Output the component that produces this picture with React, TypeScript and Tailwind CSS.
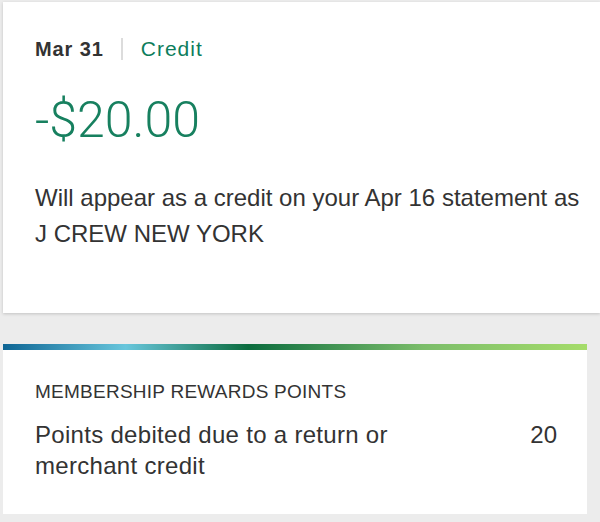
export default function App() {
  return (
    <main
      className="min-h-screen w-[600px] h-[522px] overflow-hidden bg-[#ececec] pt-[2px] pl-[3px] text-[#333]"
      style={{ fontFamily: '"Liberation Sans", Arial, sans-serif' }}
    >
      {/* Transaction card */}
      <section className="h-[311px] bg-white pl-[32px] pt-[35px] shadow-[0_1px_3px_rgba(0,0,0,0.18)]">
        <div className="flex items-center text-[20px] leading-[24px]">
          <span className="font-bold tracking-[0.9px] text-[#333]">Mar 31</span>
          <span className="ml-[17px] mr-[18px] h-[22px] w-[2px] bg-[#dcdcdc]" />
          <span className="text-[21px] tracking-[1px] text-[#0d7d5c]">Credit</span>
        </div>
        <div
          className="mt-[31px] text-[50px] leading-[56px] font-light text-[#17805f]"
          style={{ fontFamily: 'Roboto, "Liberation Sans", sans-serif' }}
        >
          -$20.00
        </div>
        <p className="mt-[32px] pr-[10px] text-[24px] leading-[36px] text-[#333]">
          Will appear as a credit on your Apr 16 statement as J CREW NEW YORK
        </p>
      </section>

      {/* Rewards card */}
      <section className="mt-[31px] w-[584px] bg-white">
        <div className="h-[6px] bg-[linear-gradient(to_right,#0e6594_0%,#68c6dc_21%,#0b6c3e_42%,#7bbd6a_72%,#a5dc6a_100%)]" />
        <div className="pl-[32px] pr-[30px] pt-[30px] pb-[33px]">
          <h3 className="text-[19px] leading-[24px] tracking-[0.25px] uppercase text-[#333]">Membership Rewards Points</h3>
          <div className="mt-[15px] flex justify-between text-[24px] leading-[31px]">
            <span className="w-[400px] tracking-[0.3px]">Points debited due to a return or merchant credit</span>
            <span>20</span>
          </div>
        </div>
      </section>
    </main>
  )
}
